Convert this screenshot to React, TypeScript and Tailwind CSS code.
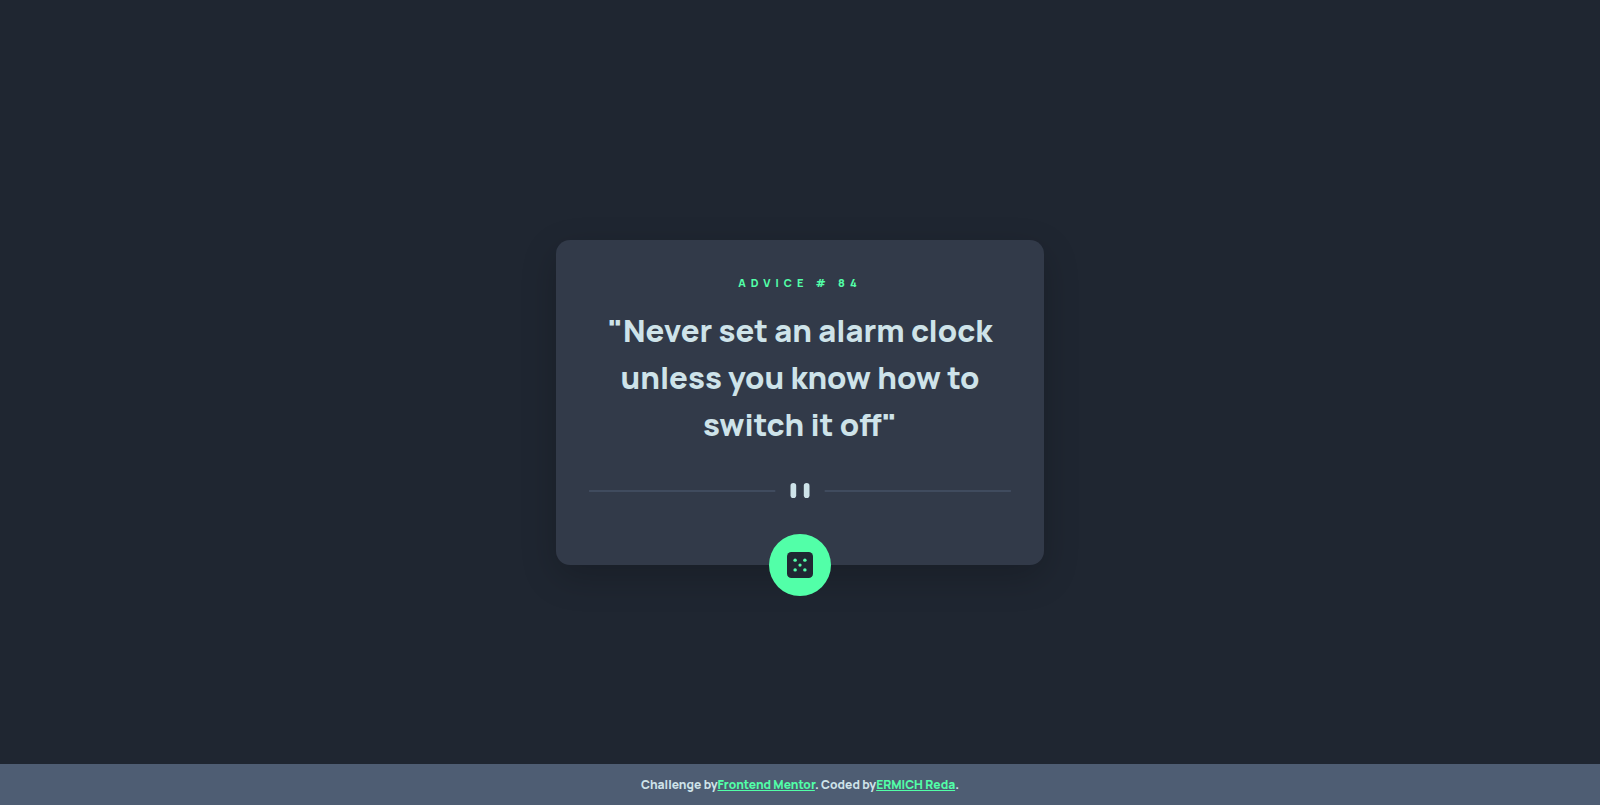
import { useState } from "react";

const advices = [
  { id: 84, text: "Never set an alarm clock unless you know how to switch it off" },
  { id: 117, text: "It is easy to sit up and take notice, what's difficult is getting up and taking action." },
];

function Divider() {
  return (
    <svg viewBox="0 0 444 16" className="block w-full" fill="none" aria-hidden="true">
      <path fill="#4F5D74" d="M0 8h196v1H0zM248 8h196v1H248z" />
      <g transform="translate(212)" fill="#CEE3E9">
        <rect width="6" height="16" rx="3" />
        <rect x="14" width="6" height="16" rx="3" />
      </g>
    </svg>
  );
}

function DiceIcon() {
  return (
    <svg viewBox="0 0 24 24" className="size-[26px]" aria-hidden="true">
      <rect width="24" height="24" rx="4" fill="#202733" />
      <g fill="#52FFA8">
        <circle cx="7.5" cy="7.5" r="1.6" />
        <circle cx="16.5" cy="7.5" r="1.6" />
        <circle cx="12" cy="12" r="1.5" />
        <circle cx="7.5" cy="16.5" r="1.6" />
        <circle cx="16.5" cy="16.5" r="1.6" />
      </g>
    </svg>
  );
}

export default function App() {
  const [index, setIndex] = useState(0);
  const advice = advices[index];

  return (
    <div className="flex min-h-screen flex-col bg-[#1f2631] font-['Manrope','Inter',sans-serif] text-[#cee3e9]">
      <main className="flex flex-1 items-center justify-center px-4 pt-[41px]">
        <section className="relative w-full max-w-[488px] rounded-[14px] bg-[#323a49] px-[33px] pt-8 pb-[67px] text-center shadow-[0_12px_36px_rgba(0,0,0,0.2)]">
          <h1 className="text-[11px] leading-[22px] font-extrabold tracking-[5px] text-[#52ffa8]">
            {`ADVICE # ${advice.id}`}
          </h1>
          <p className="mt-[13px] mb-[35px] text-[31px] leading-[47px] font-extrabold">{`"${advice.text}"`}</p>
          <Divider />
          <button
            type="button"
            aria-label="Get new advice"
            onClick={() => setIndex((index + 1) % advices.length)}
            className="absolute bottom-0 left-1/2 flex size-[62px] -translate-x-1/2 translate-y-1/2 cursor-pointer items-center justify-center rounded-full bg-[#52ffa8]"
          >
            <DiceIcon />
          </button>
        </section>
      </main>
      <footer className="flex h-[41px] items-center justify-center bg-[#4e5d73] text-[12px] font-extrabold">
        <p>
          Challenge by
          <a href="https://www.frontendmentor.io" className="text-[#52ffa8] underline">Frontend Mentor</a>
          . Coded by
          <a href="#" className="text-[#52ffa8] underline">ERMICH Reda</a>.
        </p>
      </footer>
    </div>
  );
}
